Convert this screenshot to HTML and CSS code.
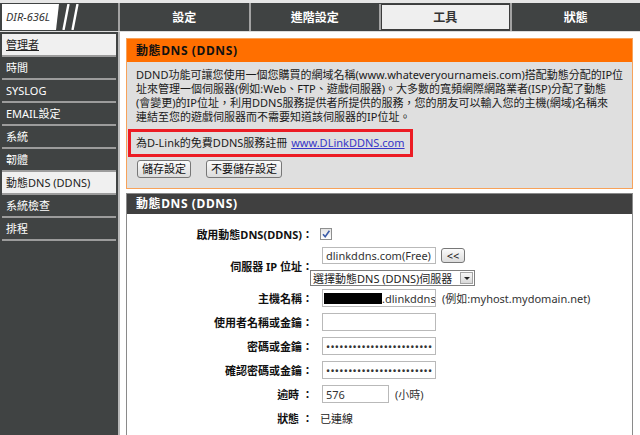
FILE: index.html
```html
<!DOCTYPE html>
<html lang="zh-Hant">
<head>
    <meta charset="UTF-8"/>
    <title>DIR-636L 工具 - 動態DNS</title>
    <link rel="stylesheet" href="styles.css">
</head>
<body>
<header class="topbar">
    <div class="brand">
        <span class="model">DIR-636L</span>
        <svg class="slashes" width="18" height="26" viewBox="0 0 18 26">
            <path d="M1.5 26 L6.5 0 M10.5 26 L15.5 0" stroke="#fff" stroke-width="2.4" fill="none"/>
        </svg>
    </div>
    <nav class="tabs">
        <a class="tab" href="#">設定</a>
        <a class="tab" href="#">進階設定</a>
        <a class="tab active" href="#">工具</a>
        <a class="tab" href="#">狀態</a>
    </nav>
</header>
<div class="layout">
    <aside class="sidebar">
        <ul class="menu">
            <li class="hover"><a href="#">管理者</a></li>
            <li><a href="#">時間</a></li>
            <li><a href="#">SYSLOG</a></li>
            <li><a href="#">EMAIL設定</a></li>
            <li><a href="#">系統</a></li>
            <li><a href="#">韌體</a></li>
            <li class="current"><a href="#">動態DNS (DDNS)</a></li>
            <li><a href="#">系統檢查</a></li>
            <li><a href="#">排程</a></li>
        </ul>
    </aside>
    <main class="content">
        <section class="box intro">
            <h2 class="box-title">動態DNS (DDNS)</h2>
            <div class="box-body">
                <p class="desc">DDND功能可讓您使用一個您購買的網域名稱(www.whateveryournameis.com)搭配動態分配的IP位<br>址來管理一個伺服器(例如:Web、FTP、遊戲伺服器)。大多數的寬頻網際網路業者(ISP)分配了動態<br>(會變更)的IP位址，利用DDNS服務提供者所提供的服務，您的朋友可以輸入您的主機(網域)名稱來<br>連結至您的遊戲伺服器而不需要知道該伺服器的IP位址。</p>
                <div class="register">為D-Link的免費DDNS服務註冊 <a href="#">www.DLinkDDNS.com</a></div>
                <div class="actions">
                    <button type="button">儲存設定</button>
                    <button type="button">不要儲存設定</button>
                </div>
            </div>
        </section>
        <section class="box settings">
            <h2 class="box-title">動態DNS (DDNS)</h2>
            <div class="form">
                <div class="row">
                    <span class="row-label">啟用動態DNS(DDNS)：</span>
                    <div class="row-value">
                        <span class="check">
                            <svg width="10" height="10" viewBox="0 0 10 10"><path d="M2 5.2 L4.2 7.8 L8.4 1.8" stroke="#3b5ca8" stroke-width="1.6" fill="none"/></svg>
                        </span>
                    </div>
                </div>
                <div class="row row-server">
                    <span class="row-label">伺服器 IP 位址：</span>
                    <div class="row-value server-stack">
                        <div class="server-line">
                            <input class="text server" type="text" value="dlinkddns.com(Free)">
                            <button type="button" class="btn-small">&lt;&lt;</button>
                        </div>
                        <span class="select">
                            <select>
                                <option>選擇動態DNS (DDNS)伺服器</option>
                            </select>
                            <span class="select-arrow"></span>
                        </span>
                    </div>
                </div>
                <div class="row">
                    <span class="row-label">主機名稱：</span>
                    <div class="row-value">
                        <span class="text host"><span class="redact"></span>.dlinkddns</span>
                        <span class="hint">(例如:myhost.mydomain.net)</span>
                    </div>
                </div>
                <div class="row">
                    <span class="row-label">使用者名稱或金鑰：</span>
                    <div class="row-value">
                        <input class="text" type="text" value="">
                    </div>
                </div>
                <div class="row">
                    <span class="row-label">密碼或金鑰：</span>
                    <div class="row-value">
                        <input class="text pw" type="password" value="dlinkddnspassword12345678901">
                    </div>
                </div>
                <div class="row">
                    <span class="row-label">確認密碼或金鑰：</span>
                    <div class="row-value">
                        <input class="text pw" type="password" value="dlinkddnspassword12345678901">
                    </div>
                </div>
                <div class="row">
                    <span class="row-label">逾時 ：</span>
                    <div class="row-value">
                        <input class="text short" type="text" value="576">
                        <span class="hint">(小時)</span>
                    </div>
                </div>
                <div class="row">
                    <span class="row-label">狀態 ：</span>
                    <div class="row-value">
                        <span class="status">已連線</span>
                    </div>
                </div>
            </div>
        </section>
    </main>
</div>
</body>
</html>
```

FILE: styles.css
```css
* {
    box-sizing: border-box;
}

body {
    margin: 0;
    height: 435px;
    overflow: hidden;
    background: #fff;
    color: #222;
    font-family: "Noto Sans", "Noto Sans CJK TC", sans-serif;
    font-size: 11px;
}

/* top bar */
.topbar {
    display: flex;
    height: 31px;
    border-top: 3px solid #e6e6e6;
    background-color: #404343;
}

.brand {
    width: 118px;
    display: flex;
    align-items: center;
    padding-left: 2px;
}

.model {
    display: block;
    width: 57px;
    height: 26px;
    line-height: 26px;
    padding-left: 4px;
    background: #fff;
    color: #333;
    font-style: italic;
    font-size: 11px;
    clip-path: polygon(0 0, 100% 0, calc(100% - 3px) 100%, 0 100%);
}

.slashes {
    margin-left: 3px;
}

.tabs {
    flex: 1;
    display: flex;
}

.tab {
    flex: 1;
    display: flex;
    align-items: center;
    justify-content: center;
    border-left: 2px solid #a3a3a3;
    color: #fff;
    font-size: 12px;
    font-weight: bold;
    text-decoration: none;
}

.tab.active {
    margin: 1px 0;
    background: #efefef;
    color: #333;
    box-shadow: inset 0 0 0 1px #3c3c3c;
}

/* side menu */
.layout {
    display: flex;
    height: 404px;
    border-top: 1px solid #dcdcdc;
}

.sidebar {
    width: 120px;
    padding: 2px 2px 0;
    background-color: #404343;
    border-right: 2px solid #b8b8b8;
}

.menu {
    list-style-type: none;
    margin: 0;
    padding: 0;
}

.menu li {
    height: 23px;
    border-bottom: 2px solid #9c9c9c;
}

.menu a {
    display: block;
    height: 21px;
    line-height: 21px;
    padding-left: 4px;
    color: #fff;
    text-decoration: none;
}

.menu li.current a,
.menu li.hover a {
    background: #f0f0f0;
    color: #222;
}

.menu li.hover a {
    text-decoration: underline;
}

/* content boxes */
.content {
    flex: 1;
    padding: 6px 7px 0 6px;
}

.box {
    border: 1px solid #8a8a8a;
}

.box-title {
    margin: 0;
    padding-left: 9px;
    font-size: 12px;
    font-weight: bold;
    letter-spacing: 0.6px;
}

.intro {
    border-color: #f7a25a;
}

.intro .box-title {
    height: 23px;
    line-height: 23px;
    background: #ff6f00;
    color: #111;
}

.intro .box-body {
    padding: 6px 2px 10px 9px;
    background: #dfdfdf;
}

.desc {
    margin: 0;
    line-height: 14px;
    white-space: nowrap;
    color: #1a1a1a;
}

.register {
    display: inline-block;
    height: 28px;
    margin: 5px 0 0 -8px;
    padding: 0 5px 0 5px;
    line-height: 22px;
    border: 3px solid #ec1c24;
    color: #1a1a1a;
}

.register a {
    margin-left: 1px;
    color: #3636c8;
}

.actions {
    display: flex;
    gap: 15px;
    margin-top: 3px;
    padding-left: 1px;
}

button {
    height: 18px;
    padding: 0 4px;
    border: 1px solid #777;
    border-radius: 3px;
    background: linear-gradient(#fbfbfb, #dcdcdc);
    color: #111;
    font-family: inherit;
    font-size: 11px;
    line-height: 14px;
}

.settings {
    margin-top: 4px;
    border-bottom: none;
    height: 260px;
}

.settings .box-title {
    height: 20px;
    line-height: 20px;
    background: #404040;
    color: #fff;
}

/* form rows */
.form {
    padding-top: 8px;
}

.row {
    display: flex;
    align-items: center;
    min-height: 24px;
}

.row-label {
    width: 186px;
    text-align: right;
    font-weight: bold;
    color: #111;
}

.row-value {
    display: flex;
    align-items: center;
    gap: 6px;
    margin-left: 9px;
}

.row-server {
    height: 40px;
}

.server-stack {
    flex-direction: column;
    align-items: flex-start;
    gap: 6px;
    padding-top: 1px;
}

.server-line {
    display: flex;
    align-items: center;
    gap: 5px;
}

.text {
    width: 114px;
    height: 18px;
    padding: 0 3px;
    border: 1px solid #b9b9b9;
    background: #fff;
    color: #333;
    font-family: inherit;
    font-size: 11px;
    outline: none;
}

.text.server {
    height: 17px;
}

.text.short {
    width: 67px;
}

.text.pw {
    letter-spacing: 0.3px;
}

.host {
    display: flex;
    align-items: center;
    padding-left: 1px;
    overflow: hidden;
    white-space: nowrap;
}

.redact {
    flex: none;
    width: 58px;
    height: 11px;
    background: #000;
}

.check {
    display: inline-flex;
    align-items: center;
    justify-content: center;
    width: 12px;
    height: 12px;
    margin-left: -2px;
    border: 1px solid #8e8f8f;
    background: linear-gradient(#e4e4e4, #fff);
}

.btn-small {
    width: 24px;
    height: 15px;
    padding: 0;
    line-height: 12px;
}

.select {
    display: inline-flex;
    align-items: center;
    width: 165px;
    height: 16px;
    margin-left: -12px;
    border: 1px solid #7f7f7f;
    background: #fff;
}

.select select {
    -webkit-appearance: none;
    appearance: none;
    flex: 1;
    height: 14px;
    padding: 0 2px;
    border: 0;
    background: transparent;
    color: #222;
    font-family: inherit;
    font-size: 11px;
    outline: none;
}

.select-arrow {
    position: relative;
    width: 13px;
    height: 12px;
    margin-right: 1px;
    border: 1px solid #a3a3a3;
    background: linear-gradient(#f6f6f6, #d9d9d9);
}

.select-arrow::after {
    content: "";
    position: absolute;
    left: 3px;
    top: 4px;
    border-left: 3px solid transparent;
    border-right: 3px solid transparent;
    border-top: 3px solid #222;
}

.hint {
    color: #333;
}

.status {
    margin-left: -2px;
    color: #222;
}
```
